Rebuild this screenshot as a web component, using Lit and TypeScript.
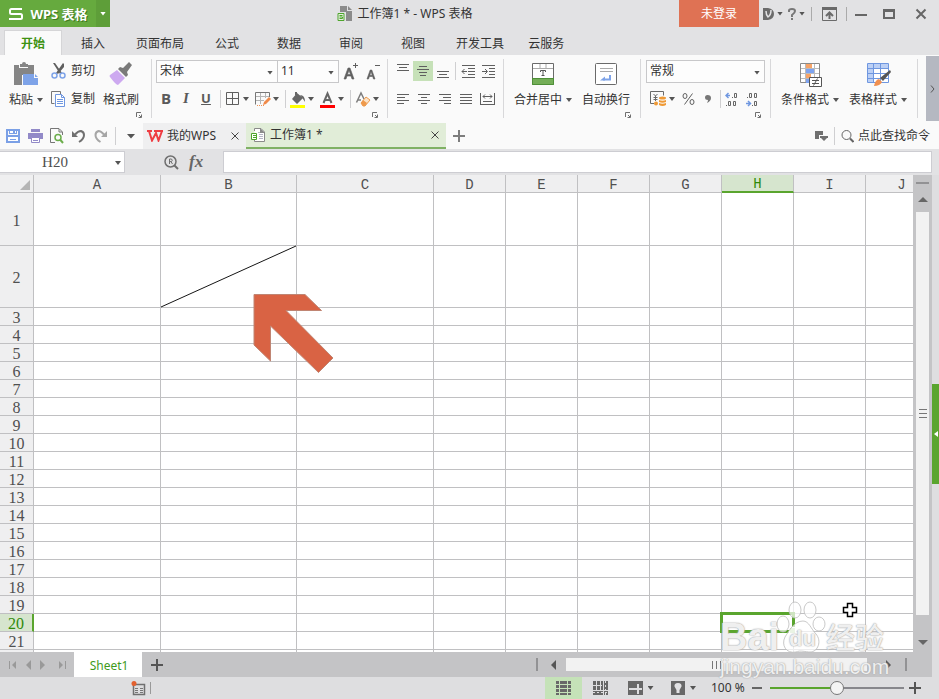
import { LitElement, html, svg, css, nothing, TemplateResult } from "lit";
import { customElement, property, state } from "lit/decorators.js";
import { classMap } from "lit/directives/class-map.js";

const icon = (w: number, h: number, body: unknown) => html`
  <svg width=${w} height=${h} viewBox="0 0 ${w} ${h}" fill="none" aria-hidden="true">${body}</svg>`;

const rule = (d: string, color = "#5f5f5f", width = 1) =>
  svg`<path d=${d} stroke=${color} stroke-width=${width}/>`;

/* Icons, drawn on a whole-pixel raster */
const I = {
  logo: icon(16, 14, rule("M14 2H3.500Q2 2 2 3.500V5.500Q2 7 3.500 7H12.500Q14 7 14 8.500V10.500Q14 12 12.500 12H1", "#fff", 2)),
  book: icon(16, 16, svg`
    <path d="M3 0h7v5h5v10H9V6H3z M11 0l4 4h-4z" fill="#8b8b8b"/>
    <path d="M1 7.500h6v7H1z M2.500 9.500h3 M2.500 11h3v1.500h-3" stroke="#4ea52d" fill="#e6efe0"/>`),
  bookTab: icon(16, 16, svg`
    <path d="M4.500 4V1.500H11l3.500 3.500v9.500H4.500V13" stroke="#8a8a8a" fill="#fff"/>
    <path d="M10 1v5h5z" fill="#8a8a8a"/>
    <path d="M8 5.500h2M9 7.500h4M9 9.500h4M9 11.500h4" stroke="#b5b5c5"/>
    <path d="M1.500 6.500h5v6h-5z M3 8.500h4 M3 10.500h4" stroke="#4ea52d" fill="#fff"/>`),
  docer: icon(12, 14, svg`
    <path d="M0 1h5q6 1 6 6t-6 6H0z" fill="#6b6b6b"/>
    <path d="M3 4q0 4 2 6 3-2 3-7" stroke="#e2e2e4" stroke-width="1.500"/>`),
  help: icon(10, 14, svg`
    <path d="M2 5V3.500Q2 2 5 2t3 2q0 2-3 4v2" stroke="#777" stroke-width="2"/>
    <path d="M4 11h2v2H4z" fill="#777"/>`),
  hideRibbon: icon(17, 16, svg`
    <path d="M1.500 2.500h14v12h-14z" stroke="#6a6a6a"/><path d="M1 1h15v3H1z" fill="#6a6a6a"/>
    <path d="M8.500 13V6.500M5 10l3.500-3.500L12 10" stroke="#6a6a6a" stroke-width="2"/>`),
  min: icon(12, 14, rule("M0 8h12", "#666", 2)),
  max: icon(12, 14, svg`<path d="M0 2h12v10H0zM2 5v5h8V5z" fill="#666" fill-rule="evenodd"/>`),
  close: icon(12, 14, rule("M1.500 2.500l9 9M10.500 2.500l-9 9", "#666", 2)),
  paste: icon(25, 24, svg`
    <path d="M0 3h5v3h9V3h6v10h-12v10H0z" fill="#858585"/>
    <path d="M6 2h2q0-2 2-2t2 2h2v3H6z" fill="#858585"/>
    <path d="M9 12h11v4h4v7H9z M21 12l3 3h-3z" fill="#7ea3e8"/>`),
  cut: icon(15, 16, svg`
    <path d="M2 0l2 0 7 10-2 1zM12 0l1 1v3L7 11l-2-1z" fill="#5f5f5f"/>
    <circle cx="3.500" cy="12.500" r="2.500" stroke="#7ea3e8" stroke-width="1.500"/>
    <circle cx="11.500" cy="12.500" r="2.500" stroke="#7ea3e8" stroke-width="1.500"/>`),
  copy: icon(15, 16, svg`
    <path d="M9.500 3V.5H.5v12h3" stroke="#777"/>
    <path d="M4.500 3.500h6l3 3v9h-9z" fill="#fff" stroke="#6f97e0"/>
    <path d="M10.500 3.500v3h3M6 8.500h6M6 10.500h6M6 12.500h6" stroke="#6f97e0"/>`),
  brush: icon(24, 24, svg`
    <path d="M20 0l3 3-5 7 1 3-2 2-8-8 2-2 3 1z" fill="#7a7a7a"/>
    <path d="M8 8l8 8-7 7q-2 0-8-8-1-1 0-2z" fill="#cda9f0"/>`),
  biggerA: icon(16, 18, svg`
    <path d="M10 3.500h5M12.500 1v5" stroke="#5f5f5f"/>
    <path d="M1 17L5 6h2l4 11H9L8 14H4l-1 3zM4.500 12.500h3L6 8.500z" fill="#5f5f5f" stroke="#5f5f5f" stroke-width=".6"/>`),
  smallerA: icon(15, 18, svg`
    <path d="M9 3.500h5" stroke="#5f5f5f"/>
    <path d="M1 17L4.200 8h1.600L9 17H7.500l-.8-2.500H3.400L2.500 17zM3.800 13.200h2.500L5 9.800z" fill="#5f5f5f" stroke="#5f5f5f" stroke-width=".6"/>`),
  borders: icon(16, 14, rule("M1.500 .5h12v12h-12zM7.500 .5v12M1.500 6.500h12")),
  drawBorder: icon(16, 16, svg`
    <path d="M5.500 1v12M10.500 1v6M1 5.500h13M1 9.500h8" stroke="#b5b5b5"/>
    <path d="M14.500 6V1.500H.5v12" stroke="#777"/>
    <path d="M2 14.500h7" stroke="#f09050" stroke-dasharray="1 1"/>
    <path d="M8 14l1-3 5-5 2 2-5 5z" fill="#f08a4a"/>`),
  fill: icon(16, 17, svg`
    <path d="M7 2l6 5-6 6-5-5z M5 1h2v3H5z" fill="#666"/>
    <path d="M10 4q5 0 5 7l-2-3z" fill="#666"/>
    <path d="M0 14h15v3H0z" fill="#ff0"/>`),
  fontColor: icon(16, 17, svg`
    <path d="M3.500 12L7.500 2.500 11.500 12M5 9h5" stroke="#666" stroke-width="2"/>
    <path d="M0 14h15v3H0z" fill="#f00"/>`),
  eraser: icon(16, 16, svg`
    <path d="M1.500 11.500L6 2l3 6M3 9h3" stroke="#7d7d7d" stroke-width="1.500"/>
    <path d="M6 12l5-6 4 3-5 6h-2z" stroke="#ee9a4c" fill="#fbe3c8"/><path d="M6 12l2-3 4 3-2 3h-2z" fill="#ee9a4c"/>`),
  vTop: icon(14, 20, rule("M1 3.500h12M3 6.500h8M1 9.500h12")),
  vMid: icon(14, 14, rule("M3 2.500h8M1 5.500h12M3 8.500h8M4 11.500h6")),
  vBot: icon(14, 20, rule("M1 10.500h12M3 13.500h8M1 16.500h12")),
  outdent: icon(15, 15, rule("M1 1.500h13M7 4.500h7M7 7.500h7M7 10.500h7M1 13.500h13M1 7.500h5M3.500 5L1 7.500 3.500 10")),
  indent: icon(15, 15, rule("M1 1.500h13M8 4.500h6M8 7.500h6M8 10.500h6M1 13.500h13M1 7.500h5M4 5l2.500 2.500L4 10")),
  hLeft: icon(13, 12, rule("M0 1.500h12M0 4.500h8M0 7.500h12M0 10.500h7")),
  hCenter: icon(13, 12, rule("M0 1.500h12M3 4.500h6M0 7.500h12M3 10.500h6")),
  hRight: icon(13, 12, rule("M0 1.500h12M4 4.500h8M0 7.500h12M5 10.500h7")),
  hJust: icon(13, 12, rule("M0 1.500h12M0 4.500h12M0 7.500h12M0 10.500h12")),
  hSpread: icon(15, 13, rule("M.5 0v12M14.500 0v12M3 3.500h9M5 1.500l-2 2 2 2M10 1.500l2 2-2 2M3 8.500h9M0 11.500h15")),
  merge: icon(24, 24, svg`
    <path d="M1.500 1.500h21v21h-21z" fill="#fff" stroke="#6a6a6a"/>
    <path d="M2 6.500h20M9 2v4M15 2v4" stroke="#aaa"/>
    <path d="M1 16h22v7H1z" fill="#74ae58"/><path d="M1 16.500h22M1.500 16v6.500h21V16" stroke="#4f8f38"/>
    <path d="M9.500 10V8.500h5V10M12 8.500V14M10.500 13.500h3" stroke="#555"/>`),
  wrap: icon(24, 24, svg`
    <rect x="1.500" y="1.500" width="21" height="21" rx="1" fill="#fff" stroke="#6a6a6a"/>
    <path d="M6 6.500h13M6 9.500h13" stroke="#aaa"/>
    <path d="M16 13v4.500H9" stroke="#7ea3e8" stroke-width="2"/><path d="M6 18.500l5-4v4z" fill="#7ea3e8"/>`),
  currency: icon(17, 16, svg`
    <path d="M4 12.500H.5V.5h13v4" stroke="#6a6a6a"/>
    <path d="M3.500 3l2 2 2-2M5.500 5v5M3.500 6.500h4M3.500 8.500h4" stroke="#6a6a6a"/>
    <ellipse cx="12.500" cy="7" rx="3.500" ry="1.500" fill="#ef9a36"/>
    <path d="M9 9q3.500 1.500 7 0v2q-3.500 1.500-7 0zM9 12q3.500 1.500 7 0v2q-3.500 2-7 0z" fill="#ef9a36"/>
    <ellipse cx="6" cy="12.500" rx="2" ry="2" fill="#ef9a36"/>`),
  percent: icon(13, 14, svg`
    <ellipse cx="3" cy="4" rx="2" ry="2.500" stroke="#5f5f5f"/><ellipse cx="10" cy="10" rx="2" ry="2.500" stroke="#5f5f5f"/>
    <path d="M10.500 1.500l-8 11" stroke="#5f5f5f"/>`),
  comma: icon(8, 14, svg`<path d="M3.500 3Q7 3 7 6t-4 5q1-2 1-3Q1 8 1 5.500T3.500 3z" fill="#777"/>`),
  decMore: icon(14, 16, svg`
    <path d="M1 4.500h4M3.500 2L1 4.500 3.500 7" stroke="#6f97e0" stroke-width="1.500"/>
    <path d="M7 6.500h1M9.500 2.500h2v4h-2zM1 14.500h1M3.500 10.500h2v4h-2zM8.500 10.500h2v4h-2z" stroke="#666"/>`),
  decLess: icon(14, 16, svg`
    <path d="M0 12.500h4M2 10l2.500 2.500L2 15" stroke="#6f97e0" stroke-width="1.500"/>
    <path d="M1 6.500h1M3.500 2.500h2v4h-2zM8.500 2.500h2v4h-2zM6 14.500h1M8.500 10.500h2v4h-2z" stroke="#666"/>`),
  cond: icon(24, 25, svg`
    <path d="M2.500 1.500h19v19h-19z" fill="#fff" stroke="#8a8a8a"/>
    <path d="M3 6.500h18M3 11.500h18M3 16.500h18M7.500 2v18M16.500 2v18" stroke="#bbb"/>
    <path d="M8 2h6v4H8zM8 12h5v4H8z" fill="#f7a468"/><path d="M8 7h8v4H8zM8 17h3v4H8z" fill="#7ea3f0"/>
    <path d="M11.500 15.500h12v9h-12z" fill="#fff" stroke="#555"/>
    <path d="M14 18.500h7M14 21.500h7M19.500 16.500l-4 7" stroke="#555"/>`),
  styles: icon(25, 25, svg`
    <path d="M1.500 1.500h21v19h-21z" fill="#fff" stroke="#6f97e0"/>
    <path d="M2 2h20v4H2z M2 6h5v14H2z" fill="#bcd0f5"/>
    <path d="M2 6.500h20M2 11.500h20M2 16.500h20M7.500 2v18M14.500 2v18" stroke="#6f97e0"/>
    <path d="M24 8l1 2-8 9-3-3z" fill="#555"/><path d="M8 24q1-6 5-7l3 3q-2 4-8 4z" fill="#f09050"/>`),
  launch: icon(6, 6, rule("M.5 5V.5H5M2.500 5.500h3v-3M3 3l2 2", "#6f6f6f")),
  more: icon(5, 8, rule("M1 .5L4 4 1 7.500", "#555")),
  save: icon(14, 14, svg`
    <path d="M0 0h14v14H0zM2 2v4h10V2h-1v3H3V2zM2 8v4h10V8z" fill="#7ba0e6" fill-rule="evenodd"/>
    <path d="M4 2h6v2H4zM2 8h10v4H2z" fill="#fff"/><path d="M7 2h2v2H7z" fill="#7ba0e6"/><path d="M4 10.500h6" stroke="#7ba0e6"/>`),
  print: icon(15, 14, svg`
    <path d="M0 4h15v6H0zM3 0h9v3H3z" fill="#928ac8"/><path d="M3.500 8.500h8v5h-8z" fill="#fff" stroke="#928ac8"/>
    <path d="M5 11.500h5" stroke="#928ac8"/>`),
  preview: icon(15, 16, svg`
    <path d="M5 14.500H.5V.5H9l3.500 3.500v3" stroke="#777"/><path d="M9 1v3h3" stroke="#777"/>
    <circle cx="8" cy="9.500" r="3" stroke="#6cae4c" stroke-width="1.500"/><path d="M10 11.500l3 3.500" stroke="#6cae4c" stroke-width="2"/>`),
  undo: icon(14, 14, svg`
    <path d="M0 2v6h6z" fill="#707070"/><path d="M3 5.500Q6 2 9 2q3 1 3 4 0 4-5 7" stroke="#707070" stroke-width="2"/>`),
  redo: icon(14, 14, svg`
    <path d="M13 2v6H7z" fill="#a6a6a6"/><path d="M10 5.500Q7 2 4.500 2 1.500 3 1.500 6q0 4 5 7" stroke="#a6a6a6" stroke-width="2"/>`),
  w: icon(16, 12, svg`
    <path d="M0 1h5M7 1h9M2 1l3 9.500L9 3l2.500 7.500L15 1" stroke="#ee3d42" stroke-width="2"/>`),
  x: icon(8, 8, rule("M.5 .5l7 7M7.500 .5l-7 7", "#444")),
  plusBig: icon(12, 12, rule("M0 6h12M6 0v12", "#7d7d7d", 2)),
  switcher: icon(13, 12, svg`<path d="M0 1h8v4H4v4H0zM5 6h8v2l-1 0-3 3-3-3H5z" fill="#707070"/>`),
  search: icon(13, 14, svg`<circle cx="5.500" cy="6" r="4.500" stroke="#666"/><path d="M9 9.500l3.500 3.500" stroke="#666" stroke-width="2"/>`),
  lookup: icon(15, 15, svg`
    <circle cx="6.500" cy="6.500" r="5.500" stroke="#6f6f6f" stroke-width="1.500"/>
    <path d="M5.500 9V4h2q1.500 1.300 0 2.600H5.500M7 6.600L8.500 9" stroke="#6f6f6f"/>
    <path d="M10.500 10.500l3.500 3.500" stroke="#6f6f6f" stroke-width="2"/>`),
  first: icon(9, 10, svg`<path d="M0 1h1v8H0zM7 1v8L3 5z" fill="#999"/>`),
  prev: icon(6, 10, svg`<path d="M5 0v10L0 5z" fill="#999"/>`),
  next: icon(6, 10, svg`<path d="M0 0v10l5-5z" fill="#999"/>`),
  last: icon(9, 10, svg`<path d="M1 1v8l4-4zM7 1h1v8H7z" fill="#999"/>`),
  plus: icon(12, 12, rule("M0 6h12M6 0v12", "#555", 2)),
  left: icon(5, 10, svg`<path d="M5 0v10L0 5z" fill="#555"/>`),
  right: icon(5, 10, svg`<path d="M0 0v10l5-5z" fill="#555"/>`),
  up: icon(10, 5, svg`<path d="M0 5h10L5 0z" fill="#666"/>`),
  down: icon(10, 5, svg`<path d="M0 0h10L5 5z" fill="#666"/>`),
  grip: icon(9, 8, rule("M.5 0v8M4.500 0v8M8.500 0v8", "#777")),
  gripV: icon(8, 9, rule("M0 .5h8M0 4.500h8M0 8.500h8", "#777")),
  macro: icon(15, 15, svg`
    <path d="M2.500 3.500h11v10h-11z" stroke="#707070" stroke-width="1.500"/>
    <path d="M4 7.500h3M9 7.500h3M4 9.500h3M9 9.500h3M4 11.500h3M9 11.500h3" stroke="#777"/><circle cx="3" cy="2.500" r="2.500" fill="#e2602f"/>`),
  viewNormal: icon(15, 14, svg`
    <path d="M0 0h15v14H0z" fill="#686868"/><path d="M0 3.500h15M0 7.500h15M0 11.500h15M3.500 0v14M11.500 0v14" stroke="#c5e2b8"/>`),
  viewPage: icon(15, 14, svg`
    <path d="M0 0h15v14H0z" fill="#686868"/><path d="M0 4.500h9M0 9.500h15M3.500 0v9M7.500 0v9M10.500 0v14" stroke="#dedee0"/>
    <path d="M0 11.500h15M12.500 0v14" stroke="#dedee0" stroke-dasharray="2 2"/>`),
  viewSplit: icon(15, 14, svg`
    <path d="M0 0h15v14H0z" fill="#686868"/><path d="M1 8h13M10 3v10" stroke="#dedee0" stroke-width="2"/>`),
  bulb: icon(14, 14, svg`
    <path d="M0 0h14v14H0z" fill="#686868"/><path d="M7 2q4 0 3.500 3.500L8.500 9v3h-3V9l-2-3.500Q3 2 7 2z" fill="#e2e2e4"/>`),
  minus: icon(10, 12, rule("M0 6h10", "#666", 2)),
  side: icon(4, 6, svg`<path d="M4 0v6L0 3z" fill="#fff"/>`),
};

const caret = html`<span class="caret"></span>`;

const COLUMNS = ["A", "B", "C", "D", "E", "F", "G", "H", "I", "J"];
const ROWS = Array.from({ length: 21 }, (_, i) => i + 1);

const reset = css`
  * { box-sizing: border-box; }
  svg { display: block; flex: none; }
  button, input, select {
    font: inherit; color: inherit; margin: 0; padding: 0; border: 0;
    border-radius: 0; background: none; outline: 0;
  }
  button { display: flex; align-items: center; justify-content: center; white-space: nowrap; flex: none; }
`;

@customElement("sheet-grid")
class SheetGrid extends LitElement {
  @property() column = "H";
  @property({ type: Number }) row = 20;

  static styles = [reset, css`
    :host { display: block; flex: 1; min-width: 0; overflow: hidden; position: relative; background: #fff; }
    table { table-layout: fixed; width: 100%; min-width: 938px; border-collapse: separate; border-spacing: 0; }
    .c-head { width: 34px; }
    .c-a { width: 127px; }
    .c-b { width: 136px; }
    .c-c { width: 137px; }
    .c-std { width: 72px; }
    th, td { padding: 0; border: 0 solid #c0c0c2; border-width: 0 1px 1px 0; height: 18px; line-height: 14px; }
    th { background: #efeff0; color: #505050; font-weight: 400; padding-top: 3px; }
    thead th { font-family: "Liberation Mono", monospace; font-size: 14px; }
    tbody th { font-family: "Liberation Serif", serif; font-size: 16px; }
    th.on { background: #d6e5ce; color: #2f8a0a; }
    thead th.on { border-bottom: 2px solid #5aa52e; padding-top: 2px; }
    tbody th.on { border-right: 2px solid #5aa52e; }
    .r1 th, .r1 td { height: 53px; }
    .r2 th, .r2 td { height: 62px; }
    .corner svg { margin-left: auto; margin-right: 3px; }
    td { position: relative; }
    .diagonal { position: absolute; left: 0; top: 0; width: 100%; height: 100%; overflow: visible; }
    .selection { position: absolute; inset: -2px; border: 3px solid #5aa52e; z-index: 1; }
    .selection::after {
      content: ""; position: absolute; right: -4px; bottom: -4px; width: 5px; height: 5px;
      background: #b9dba5; border: 1px solid #fff; box-sizing: content-box;
    }
    .pointer { position: absolute; left: 252px; top: 117px; z-index: 2; }
    .cursor { position: absolute; left: 842px; top: 427px; z-index: 4; }
  `];

  render() {
    return html`
      <table>
        <colgroup>
          <col class="c-head"><col class="c-a"><col class="c-b"><col class="c-c">
          ${COLUMNS.slice(3, -1).map(() => html`<col class="c-std">`)}<col>
        </colgroup>
        <thead>
          <tr>
            <th class="corner">${icon(10, 10, svg`<path d="M10 0v10H0z" fill="#b5b5b5"/>`)}</th>
            ${COLUMNS.map((c) => html`<th scope="col" class=${classMap({ on: c === this.column })}>${c}</th>`)}
          </tr>
        </thead>
        <tbody>
          ${ROWS.map((r) => html`
            <tr class="r${r}">
              <th scope="row" class=${classMap({ on: r === this.row })}>${r}</th>
              ${COLUMNS.map((c) => html`<td>${this.cell(c, r)}</td>`)}
            </tr>`)}
          <tr><th></th>${COLUMNS.map(() => html`<td></td>`)}</tr>
        </tbody>
      </table>
      <svg class="pointer" width="84" height="84" viewBox="0 0 84 84" aria-hidden="true">
        <path d="M2 2.500H53L69.500 18.500H34L81 66 66.500 80.500 18.500 34V69L2 53z" fill="#d96344" stroke="#c08573" stroke-width="1"/>
      </svg>
      <svg class="cursor" width="16" height="16" viewBox="0 0 16 16" aria-hidden="true">
        <path d="M5.500 1.500h5v4h4v5h-4v4h-5v-4h-4v-5h4z" fill="#fff" stroke="#000" stroke-width="1.500"/>
      </svg>`;
  }

  private cell(c: string, r: number) {
    if (c === "B" && r === 2) {
      return html`<svg class="diagonal" viewBox="0 0 136 62" preserveAspectRatio="none" aria-hidden="true">
        <path d="M0 62L136 0" stroke="#111" stroke-width="1"/></svg>`;
    }
    return c === this.column && r === this.row ? html`<div class="selection"></div>` : nothing;
  }
}

@customElement("app-root")
class AppRoot extends LitElement {
  @state() private tab = "开始";
  @state() private zoom = 50;

  static styles = [reset, css`
    :host {
      display: flex; flex-direction: column; height: 100vh; overflow: hidden; background: #e2e2e4; color: #333;
      font: 12px/16px "Noto Sans", "Noto Sans CJK SC", sans-serif;
    }
    .caret { flex: none; width: 6px; height: 4px; background: #555; clip-path: polygon(0 0, 100% 0, 50% 100%); }
    .sep { flex: none; width: 1px; height: 18px; background: #cfcfd1; }

    .title { display: flex; height: 27px; align-items: center; }
    .brand, .brand-menu { height: 27px; background: #66aa3e; color: #fff; }
    .brand { width: 96px; gap: 6px; font-size: 13px; font-weight: 700; text-shadow: 1px 1px 0 #3f7a20; }
    .brand-menu { width: 14px; background: #5e9e39; }
    .brand-menu .caret { background: #fff; }
    .name { flex: 1; display: flex; justify-content: center; align-items: center; gap: 5px; padding-left: 20px; font-size: 12px; }
    .login { width: 80px; height: 27px; background: #df7254; color: #fff; }
    .sys { display: flex; align-items: center; height: 27px; padding: 0 12px 0 4px; }
    .sys button { gap: 2px; height: 27px; }
    .sys .sep { height: 14px; background: #aaa; }
    .sys .pair { width: 24px; justify-content: flex-start; }
    .pop { width: 34px; }
    .win { width: 28px; }
    .sys .win:last-child { width: 12px; margin-left: 12px; }

    .tabs { display: flex; padding: 3px 4px 0; height: 28px; }
    .tabs button { height: 25px; padding: 2px 19px 0; }
    .tabs .w3 { padding: 2px 12px 0; }
    .tabs .w4 { padding: 2px 12px 0; }
    .tabs .on { background: #fafafa; color: #3d9212; font-weight: 700; padding: 1px 16px 0; border: 1px solid #d5d5d7; border-bottom: 0; }

    .ribbon { display: flex; background: #fafafa; height: 68px; padding: 4px 0 5px; }
    .group { display: flex; flex-direction: column; height: 59px; padding: 1px 0 0; border-right: 1px solid #d8d8da; flex: none; }
    .body { display: flex; height: 50px; }
    .stack { display: flex; flex-direction: column; gap: 6px; }
    .row { display: flex; align-items: center; height: 22px; }
    .foot { display: flex; justify-content: flex-end; padding: 2px 9px 0 0; height: 8px; }
    .big { flex-direction: column; justify-content: flex-start; height: 50px; }
    .big .pic { display: flex; align-items: center; height: 28px; }
    .big .cap { display: flex; align-items: center; height: 22px; gap: 4px; padding-top: 2px; }
    .small { gap: 5px; height: 22px; }
    .g-clip { width: 152px; }
    .g-clip .body { padding-left: 9px; gap: 8px; }
    .g-font { width: 236px; }
    .g-font .body { padding-left: 4px; }
    .g-align { width: 116px; }
    .g-align .body { padding-left: 5px; }
    .g-merge { width: 137px; }
    .g-num { width: 130px; }
    .g-num .body { padding-left: 5px; }
    .g-style { width: 147px; }
    .wide .body { padding-left: 10px; gap: 10px; }
    .pick { position: relative; display: flex; height: 23px; border: 1px solid #c8c8ca; background: #fdfdfd; }
    .pick select { appearance: none; width: 100%; padding-left: 3px; }
    .pick .caret { position: absolute; right: 4px; top: 10px; pointer-events: none; }
    .p-face { width: 122px; }
    .p-size { width: 62px; margin-left: -1px; }
    .p-format { width: 119px; }
    .b16 { width: 16px; height: 20px; }
    .b20 { width: 20px; height: 20px; }
    .b21 { width: 21px; height: 20px; }
    .b24 { width: 24px; height: 20px; }
    .drop { width: 30px; height: 20px; gap: 2px; justify-content: flex-start; padding-left: 4px; }
    .row .sep { margin-left: 4px; }
    .row .tight { margin: 0 2px; }
    .letter { font: 700 15px/20px "Open Sans", sans-serif; color: #5a5a5a; padding-bottom: 2px; }
    .i { font-family: "Liberation Serif", serif; font-style: italic; }
    .u { text-decoration: underline; font-size: 13px; }
    .lit { background: #c6e1b8; }
    .expand { width: 13px; height: 65px; margin: -3px 0 0 auto; background: #b5b8c1; }

    .docs { display: flex; align-items: center; background: #fafafa; height: 26px; }
    .quick { display: flex; align-items: center; padding-left: 2px; width: 143px; }
    .quick button { width: 22px; height: 24px; }
    .quick .sep { margin: 0 4px 0 3px; }
    .quick .caret { width: 9px; height: 5px; }
    .doc { display: flex; align-items: center; height: 26px; gap: 4px; padding: 0 7px 0 4px; background: #efeff0; width: 103px; }
    .doc button:last-child { margin-left: auto; }
    .doc.on { width: 200px; background: #e1edd8; border-bottom: 2px solid #7fb164; }
    .new { width: 26px; height: 26px; }
    .find { display: flex; align-items: center; gap: 6px; margin-left: auto; padding-right: 9px; }
    .find button { gap: 4px; }

    .formula { display: flex; height: 26px; padding: 2px 7px 2px 0; }
    .formula input { height: 22px; background: #fff; border: 1px solid #cdcdd2; }
    .namebox { position: relative; width: 125px; }
    .namebox input { width: 125px; border-left: 0; text-align: center; padding: 1px 14px 0 0; font: 15px/20px "Liberation Serif", serif; color: #505050; }
    .namebox .caret { position: absolute; right: 4px; top: 10px; }
    .fx { display: flex; align-items: center; gap: 10px; padding-left: 39px; width: 98px; }
    .fx button { height: 22px; }
    .fxl { font: italic 700 17px/20px "Liberation Serif", serif; color: #666; }
    .line { flex: 1; min-width: 0; padding: 0 4px; }

    .work { display: flex; flex: 1; min-height: 0; }
    .pane { display: flex; flex-direction: column; flex: 1; min-width: 0; position: relative; }
    .sheet { display: flex; flex: 1; min-height: 0; }
    .vbar { display: flex; flex-direction: column; align-items: center; width: 19px; background: #c4c4c6; padding-top: 7px; }
    .vbar button { width: 19px; height: 28px; padding-top: 2px; }
    .splith { width: 13px; height: 2px; background: #929294; }
    .vthumb { display: flex; align-items: center; justify-content: center; width: 13px; flex: 1; background: #f2f2f2; }
    .vbar .dn { height: 37px; padding-top: 18px; }
    .edge { display: flex; flex-direction: column; width: 7px; padding-top: 209px; background: #dedee0; }
    .edge button { width: 7px; height: 100px; background: #5aa52e; }

    .sheetbar { display: flex; align-items: center; height: 25px; background: #c4c4c6; }
    .nav { display: flex; align-items: center; gap: 8px; width: 74px; padding-left: 9px; }
    .nav button:last-child { margin-left: 4px; }
    .sheettab { width: 68px; height: 25px; background: #fff; color: #3f9a1c; padding: 2px 0 0 2px; }
    .add { width: 30px; height: 25px; }
    .hscroll { display: flex; align-items: center; width: 396px; margin-left: auto; height: 25px; padding-right: 25px; }
    .bar { width: 2px; height: 13px; background: #929294; }
    .hscroll button { height: 25px; width: 28px; padding-left: 2px; }
    .hthumb { display: flex; align-items: center; justify-content: center; flex: 1; height: 13px; background: #f2f2f2; }
    .hscroll .rt { width: 38px; padding-left: 4px; }

    .status { display: flex; align-items: center; height: 22px; background: #dedee0; }
    .rec { display: flex; align-items: center; gap: 4px; padding-left: 131px; }
    .rec .sep { height: 12px; background: #999; }
    .views { display: flex; align-items: center; margin-left: auto; padding-right: 18px; }
    .v { width: 37px; height: 22px; }
    .v2 { width: 43px; height: 22px; gap: 5px; }
    .v.on { background: #c5e2b8; }
    .pct { width: 42px; padding-left: 6px; font-size: 12px; white-space: nowrap; }
    .zb { width: 20px; height: 22px; margin-right: 3px; }
    .zp { width: 17px; height: 22px; padding-left: 5px; }
    .range { appearance: none; width: 134px; height: 16px; }
    .range::-webkit-slider-runnable-track {
      height: 2px; background: linear-gradient(90deg, #5aa52e 50%, #87878c 50%);
    }
    .range::-webkit-slider-thumb {
      appearance: none; width: 14px; height: 14px; margin-top: -6px; border-radius: 50%;
      background: #f4f4f4; border: 1px solid #777;
    }

    .mark {
      position: absolute; right: 44px; bottom: -2px; width: 168px; pointer-events: none; z-index: 3;
      color: rgba(255, 255, 255, .85); font-family: "Liberation Sans", "Noto Sans CJK SC", sans-serif; font-weight: 700;
      text-shadow: 0 0 1px #999, 0 0 2px #bbb; white-space: nowrap;
    }
    .top { display: flex; align-items: flex-end; height: 56px; }
    .bai { font-size: 38px; line-height: 36px; width: 56px; }
    .paw { position: relative; width: 50px; height: 56px; }
    .paw span { position: absolute; left: 13px; bottom: 4px; font-size: 22px; line-height: 24px; }
    .cn { font-size: 29px; line-height: 32px; font-weight: 500; }
    .url { display: block; font-size: 21px; line-height: 24px; font-weight: 400; }
  `];

  private big(label: string, pic: TemplateResult, menu = false) {
    return html`<button class="big">
      <span class="pic">${pic}</span><span class="cap">${label}${menu ? caret : nothing}</span>
    </button>`;
  }

  private tool(label: string, pic: TemplateResult, cls: string) {
    return html`<button class=${cls} aria-label=${label}>${pic}${cls === "drop" ? caret : nothing}</button>`;
  }

  private foot(show = true) {
    return html`<div class="foot">${show ? html`<button aria-label="更多设置">${I.launch}</button>` : nothing}</div>`;
  }

  private pick(label: string, value: string, cls: string) {
    return html`<label class="pick ${cls}"><select aria-label=${label}><option>${value}</option></select>${caret}</label>`;
  }

  render() {
    const tabs = ["开始", "插入", "页面布局", "公式", "数据", "审阅", "视图", "开发工具", "云服务"];
    return html`
      <header class="title">
        <button class="brand">${I.logo}<span>WPS 表格</span></button>
        <button class="brand-menu" aria-label="菜单">${caret}</button>
        <div class="name">${I.book}<span>工作簿1 * - WPS 表格</span></div>
        <button class="login">未登录</button>
        <div class="sys">
          <button class="pair" aria-label="稻壳">${I.docer}${caret}</button>
          <button class="pair" aria-label="帮助">${I.help}${caret}</button>
          <span class="sep"></span>
          <button class="pop" aria-label="隐藏功能区">${I.hideRibbon}</button>
          <span class="sep"></span>
          <button class="win" aria-label="最小化">${I.min}</button>
          <button class="win" aria-label="最大化">${I.max}</button>
          <button class="win" aria-label="关闭">${I.close}</button>
        </div>
      </header>

      <nav class="tabs">
        ${tabs.map((t) => html`<button
          class=${classMap({ on: t === this.tab, w3: t.length === 3, w4: t.length === 4 })}
          @click=${() => (this.tab = t)}>${t}</button>`)}
      </nav>

      <section class="ribbon">
        <div class="group g-clip">
          <div class="body">
            ${this.big("粘贴", I.paste, true)}
            <div class="stack">
              <button class="small">${I.cut}剪切</button>
              <button class="small">${I.copy}复制</button>
            </div>
            ${this.big("格式刷", I.brush)}
          </div>
          ${this.foot()}
        </div>

        <div class="group g-font">
          <div class="body stack">
            <div class="row">
              ${this.pick("字体", "宋体", "p-face")}${this.pick("字号", "11", "p-size")}
              ${this.tool("增大字号", I.biggerA, "b24")}${this.tool("减小字号", I.smallerA, "b20")}
            </div>
            <div class="row">
              <button class="b20 letter">B</button>
              <button class="b20 letter i">I</button>
              <button class="b20 letter u">U</button>
              <span class="sep"></span>
              ${this.tool("边框", I.borders, "drop")}${this.tool("绘图边框", I.drawBorder, "drop")}
              <span class="sep"></span>
              ${this.tool("填充颜色", I.fill, "drop")}${this.tool("字体颜色", I.fontColor, "drop")}
              <span class="sep"></span>
              ${this.tool("清除", I.eraser, "drop")}
            </div>
          </div>
          ${this.foot()}
        </div>

        <div class="group g-align">
          <div class="body stack">
            <div class="row">
              ${this.tool("顶端对齐", I.vTop, "b20")}${this.tool("垂直居中", I.vMid, "b20 lit")}${this.tool("底端对齐", I.vBot, "b20")}
              <span class="sep tight"></span>
              ${this.tool("减少缩进", I.outdent, "b20")}${this.tool("增加缩进", I.indent, "b20")}
            </div>
            <div class="row">
              ${this.tool("左对齐", I.hLeft, "b21")}${this.tool("水平居中", I.hCenter, "b21")}${this.tool("右对齐", I.hRight, "b21")}
              ${this.tool("两端对齐", I.hJust, "b21")}${this.tool("分散对齐", I.hSpread, "b21")}
            </div>
          </div>
          ${this.foot(false)}
        </div>

        <div class="group g-merge wide">
          <div class="body">${this.big("合并居中", I.merge, true)}${this.big("自动换行", I.wrap)}</div>
          ${this.foot()}
        </div>

        <div class="group g-num">
          <div class="body stack">
            <div class="row">${this.pick("数字格式", "常规", "p-format")}</div>
            <div class="row">
              ${this.tool("货币", I.currency, "drop")}${this.tool("百分比", I.percent, "b24")}${this.tool("千位分隔", I.comma, "b16")}
              <span class="sep"></span>
              ${this.tool("增加小数位", I.decMore, "b21")}${this.tool("减少小数位", I.decLess, "b21")}
            </div>
          </div>
          ${this.foot()}
        </div>

        <div class="group g-style wide">
          <div class="body">${this.big("条件格式", I.cond, true)}${this.big("表格样式", I.styles, true)}</div>
        </div>
        <button class="expand" aria-label="展开">${I.more}</button>
      </section>

      <section class="docs">
        <div class="quick">
          <button aria-label="保存">${I.save}</button>
          <button aria-label="打印">${I.print}</button>
          <button aria-label="打印预览">${I.preview}</button>
          <button aria-label="撤销">${I.undo}</button>
          <button aria-label="恢复">${I.redo}</button>
          <span class="sep"></span>
          <button aria-label="自定义">${caret}</button>
        </div>
        <div class="doc"><button aria-label="WPS">${I.w}</button><span>我的WPS</span><button aria-label="关闭标签">${I.x}</button></div>
        <div class="doc on"><button aria-label="工作簿">${I.bookTab}</button><span>工作簿1 *</span><button aria-label="关闭标签">${I.x}</button></div>
        <button class="new" aria-label="新建">${I.plusBig}</button>
        <div class="find">
          <button aria-label="切换窗口">${I.switcher}</button>
          <span class="sep"></span>
          <button>${I.search}点此查找命令</button>
        </div>
      </section>

      <section class="formula">
        <div class="namebox"><input aria-label="名称框" value="H20">${caret}</div>
        <div class="fx">
          <button aria-label="查找函数">${I.lookup}</button>
          <button class="fxl">fx</button>
        </div>
        <input class="line" aria-label="编辑栏">
      </section>

      <main class="work">
        <div class="pane">
          <div class="sheet">
            <sheet-grid column="H" row="20"></sheet-grid>
            <div class="vbar">
              <span class="splith"></span>
              <button aria-label="向上">${I.up}</button>
              <div class="vthumb">${I.gripV}</div>
              <button class="dn" aria-label="向下">${I.down}</button>
            </div>
          </div>
          <div class="sheetbar">
            <div class="nav">
              <button aria-label="第一张">${I.first}</button><button aria-label="上一张">${I.prev}</button>
              <button aria-label="下一张">${I.next}</button><button aria-label="最后一张">${I.last}</button>
            </div>
            <button class="sheettab">Sheet1</button>
            <button class="add" aria-label="新建工作表">${I.plus}</button>
            <div class="hscroll">
              <span class="bar"></span>
              <button aria-label="向左">${I.left}</button>
              <div class="hthumb">${I.grip}</div>
              <button class="rt" aria-label="向右">${I.right}</button>
              <span class="bar"></span>
            </div>
          </div>
          <div class="mark">
            <div class="top">
              <span class="bai">Bai</span>
              <div class="paw">
                <svg width="50" height="56" viewBox="0 0 50 56" fill="#fff" fill-opacity=".7" stroke="#bbb" stroke-opacity=".8" aria-hidden="true">
                  <ellipse cx="7" cy="25" rx="6" ry="8"/><ellipse cx="19" cy="11" rx="6" ry="8"/>
                  <ellipse cx="34" cy="11" rx="6" ry="8"/><ellipse cx="43" cy="25" rx="6" ry="7"/>
                  <path d="M27 22c6 0 8 8 13 13 6 7 2 18-6 18-4 0-10-2-14 0-10 2-15-7-11-15 4-6 9-16 18-16z"/>
                </svg>
                <span>du</span>
              </div>
              <span class="cn">经验</span>
            </div>
            <span class="url">jingyan.baidu.com</span>
          </div>
        </div>
        <aside class="edge"><button aria-label="展开侧栏">${I.side}</button></aside>
      </main>

      <footer class="status">
        <div class="rec"><button aria-label="录制宏">${I.macro}</button><span class="sep"></span></div>
        <div class="views">
          <button class="v on" aria-label="普通视图">${I.viewNormal}</button>
          <button class="v" aria-label="分页预览">${I.viewPage}</button>
          <button class="v2" aria-label="拆分">${I.viewSplit}${caret}</button>
          <button class="v2" aria-label="护眼模式">${I.bulb}${caret}</button>
          <span class="pct">100 %</span>
          <button class="zb" aria-label="缩小">${I.minus}</button>
          <input class="range" type="range" min="0" max="100" aria-label="缩放" .value=${String(this.zoom)}>
          <button class="zp" aria-label="放大">${I.plus}</button>
        </div>
      </footer>`;
  }
}
